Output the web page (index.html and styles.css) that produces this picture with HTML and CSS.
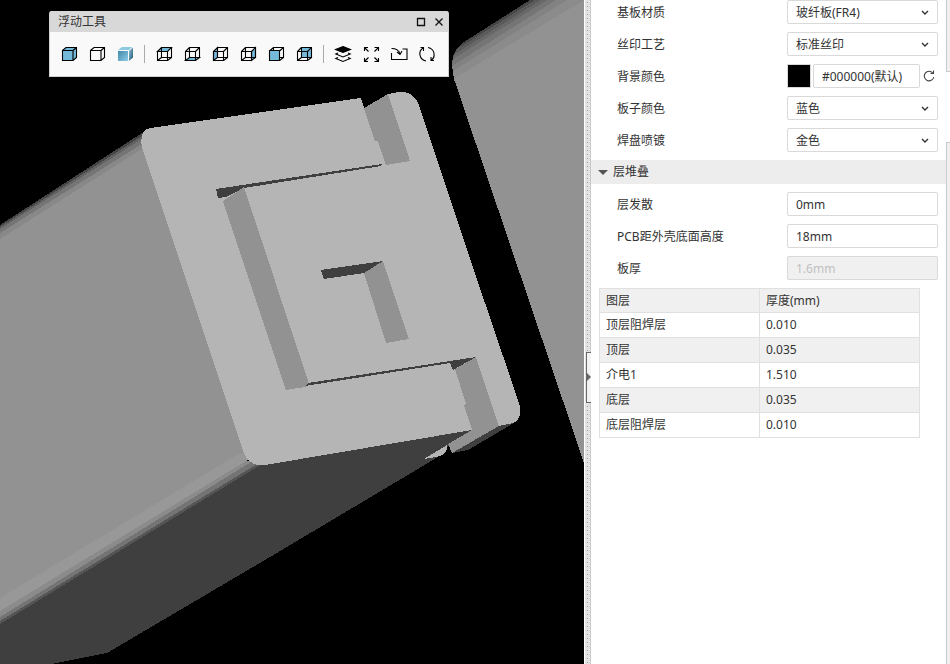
FILE: index.html
```html
<!DOCTYPE html>
<html lang="zh-CN">
<head>
<meta charset="utf-8">
<title>3D 预览</title>
<link rel="stylesheet" href="styles.css">
</head>
<body>
<div class="app">
  <main class="stage">
    <svg class="scene" viewBox="0 0 584 664" preserveAspectRatio="xMinYMin slice" shape-rendering="crispEdges" aria-hidden="true">
      <!-- right body -->
      <path fill="#464646" d="M530 0L464 42Q455 48 453 57L452 63L454 79L468 120L584 463V0Z"/>
      <path fill="#5a5a5a" d="M535 0L457 49L453 57L454 79L584 463V0Z"/>
      <path fill="#686868" d="M541 0L455 54L452 61L454 79L584 463V0Z"/>
      <path fill="#757575" d="M547 0L453 59L452 65L454 79L584 463V0Z"/>
      <path fill="#828282" d="M556 0L452 66L454 79L584 463V0Z"/>
      <path fill="#8b8b8b" d="M567 0L453 71L454 79L584 463V0Z"/>
      <path fill="#929292" d="M584 0L455 78L468 120L584 463Z"/>
      <!-- left body with its rounded edges -->
      <path fill="#444" d="M0 225L145 131L200 150V300L0 300Z"/>
      <path fill="#626262" d="M0 227L145 134V300H0Z"/>
      <path fill="#757575" d="M0 229L145 137V300H0Z"/>
      <path fill="#888" d="M0 233L145 142V300H0Z"/>
      <path fill="#929292" d="M0 239L145 147L262 445L0 599Z"/>
      <path fill="#989898" d="M0 598L240 453L262 450L246 461L0 611Z"/>
      <path fill="#8b8b8b" d="M0 611L246 461L262 460L0 617Z"/>
      <path fill="#747474" d="M0 617L251 462L262 462L0 621Z"/>
      <path fill="#555" d="M0 621L257 464L266 464L0 624Z"/>
      <path fill="#3f3f3f" d="M0 624L262 464L472 430L448 446L438 457L270 557L107 653L51 664H0Z"/>
      <path fill="#b5b5b5" d="M424 459L447 445V449Q444 456 436 457Z"/>
      <!-- front face -->
      <path fill="#b5b5b5" d="M150 128L361 98L364 108L388 94L398 92H404Q414 93 419 105L484 300L520 406Q522 421 511 424L499 426L472 430L265 465Q250 467 244 453L142 147Q139 130 150 128Z"/>
      <path fill="#929292" d="M364 108L388 94L410 161L386 165L378 141H375Z"/>
      <path fill="#3f3f3f" d="M216 189L382 164L381 166L244 188L226 197L218 198Z"/>
      <path fill="#929292" d="M223 201L244 187L309 384L305 387L286 390Z"/>
      <path fill="#3f3f3f" d="M321 270L383 261L364 273L324 279Z"/>
      <path fill="#929292" d="M364 273L383 261L409 339L386 343Z"/>
      <path fill="#3f3f3f" d="M308 383L476 357L453 370L450 363L305 386Z"/>
      <path fill="#929292" d="M476 357L499 426L452 453L448 444L472 430L464 405L466 404L455 369Z"/>
      <path fill="#3f3f3f" d="M499 426L514 423L468 450L452 453Z"/>
    </svg>

    <section class="toolbox" aria-label="浮动工具">
      <header class="toolbox-title">
        <span class="toolbox-name">浮动工具</span>
        <button class="win-btn" aria-label="最大化"><svg viewBox="0 0 10 10" width="10" height="10"><path d="M1.5 1.5h7v7h-7z"/></svg></button>
        <button class="win-btn" aria-label="关闭"><svg viewBox="0 0 10 10" width="10" height="10"><path d="M1.5 1.5l7 7M8.5 1.5l-7 7"/></svg></button>
      </header>
      <div class="toolbox-body">
        <button class="tool" aria-label="实体"><svg viewBox="0 0 16 16"><path class="face" d="M1.5 4.5L5 1.5H15.5V11.5L12 14.5H1.500Z"/><path d="M1.5 4.5H12V14.5M12 4.5L15.5 1.5"/></svg></button>
        <button class="tool" aria-label="轮廓"><svg viewBox="0 0 16 16"><path d="M1.5 4.5L5 1.5H15.5V11.5L12 14.5H1.5ZM1.5 4.5H12V14.5M12 4.5L15.5 1.5"/></svg></button>
        <button class="tool" aria-label="着色"><svg viewBox="0 0 16 16">
          <defs>
            <linearGradient id="front" x1="0" y1="0" x2="1" y2="1"><stop offset="0" stop-color="#3f87a8"/><stop offset="1" stop-color="#8fcde8"/></linearGradient>
            <linearGradient id="side" x1="0" y1="0" x2="1" y2="1"><stop offset="0" stop-color="#8fc9e2"/><stop offset="1" stop-color="#1f4f68"/></linearGradient>
          </defs>
          <path class="plain" fill="url(#front)" d="M1 5H11V15H1Z"/><path class="plain" fill="#8cc8e0" d="M1 4L5 1H15L12 4Z"/><path class="plain" fill="url(#side)" d="M12 5L16 1.5V11.5L12 15Z"/></svg></button>
        <span class="divider"></span>
        <button class="tool" aria-label="顶视图"><svg viewBox="0 0 16 16"><path class="face" d="M1.5 5.5L5.5 1.5H15.5L11.5 5.5Z"/><path d="M1.5 5.5H11.5V14.5H1.5ZM5.5 1.5H15.5V11.5H5.5ZM1.5 14.5L5.5 11.5M11.5 14.5L15.5 11.5"/></svg></button>
        <button class="tool" aria-label="底视图"><svg viewBox="0 0 16 16"><path class="face" d="M1.5 14.5L5.5 11.5H15.5L11.5 14.5Z"/><path d="M1.5 5.5H11.5V14.5H1.5ZM5.5 1.5H15.5V11.5H5.5ZM1.5 5.5L5.5 1.5M11.5 5.5L15.5 1.5"/></svg></button>
        <button class="tool" aria-label="左视图"><svg viewBox="0 0 16 16"><path class="face" d="M1.5 5.5L5.5 1.5V11.5L1.5 14.5Z"/><path d="M1.5 5.5H11.5V14.5H1.5ZM5.5 1.5H15.5V11.5H5.5ZM11.5 5.5L15.5 1.5M11.5 14.5L15.5 11.5"/></svg></button>
        <button class="tool" aria-label="右视图"><svg viewBox="0 0 16 16"><path class="face" d="M11.5 5.5L15.5 1.5V11.5L11.5 14.5Z"/><path d="M1.5 5.5H11.5V14.5H1.5ZM5.5 1.5H15.5V11.5H5.5ZM1.5 5.5L5.5 1.5M1.5 14.5L5.5 11.5"/></svg></button>
        <button class="tool" aria-label="前视图"><svg viewBox="0 0 16 16"><path d="M5.5 5V1.5H15.5V11.5H11.5M1.5 5L5.5 1.5M11.5 5L15.5 1.5M11.5 14.5L15.5 11.5"/><path class="face" d="M1.5 4.5H11.5V14.5H1.5Z"/></svg></button>
        <button class="tool" aria-label="后视图"><svg viewBox="0 0 16 16"><path class="face" d="M5.5 1.5H15.5V11.5H5.5Z"/><path d="M1.5 5.5H11.5V14.5H1.5ZM1.5 5.5L5.5 1.5M11.5 5.5L15.5 1.5M1.5 14.5L5.5 11.5M11.5 14.5L15.5 11.5"/></svg></button>
        <span class="divider"></span>
        <button class="tool" aria-label="图层"><svg viewBox="0 0 16 16"><path class="solid" d="M8 .5L15.5 3.5L8 6.5L.5 3.5Z"/><path d="M3 7L.8 8L8 11L15.2 8L13 7M3 11.5L.8 12.5L8 15.5L15.2 12.5L13 11.5"/></svg></button>
        <button class="tool" aria-label="适应窗口"><svg viewBox="0 0 16 16"><path d="M1.500 5V1.500H5M1.500 1.500L5.500 5.500M11.500 1.500H15.500V5M15.500 1.500L11.500 5.500M1.500 12V15.500H5M1.500 15.500L5.500 11.500M11.500 15.500H15.500V12M15.500 15.500L11.500 11.500"/></svg></button>
        <button class="tool" aria-label="导入"><svg viewBox="0 0 16 16"><path d="M.5 7V13.500H16V3H11.500M.5 2.500C5 2.500 8 4 9 8M6 6L9 8.500L11 5"/></svg></button>
        <button class="tool" aria-label="重置"><svg viewBox="0 0 16 16"><path d="M7 15C0 13.500 -1 5 4 2M1.500 1.500H4.500V5M9 1.500C16 3 17 11 12 14.500M15 14.500H12V11"/></svg></button>
      </div>
    </section>
  </main>

  <div class="splitter"><button class="collapse" aria-label="收起面板"></button></div>

  <aside class="panel">
    <div class="fields">
      <label for="base">基板材质</label>
      <div class="pick"><select id="base"><option>玻纤板(FR4)</option></select><svg viewBox="0 0 8 6"><path d="M1 1l3 3 3-3"/></svg></div>
      <label for="silk">丝印工艺</label>
      <div class="pick"><select id="silk"><option>标准丝印</option></select><svg viewBox="0 0 8 6"><path d="M1 1l3 3 3-3"/></svg></div>
      <label for="bg">背景颜色</label>
      <div class="color-row">
        <button class="swatch" aria-label="选择颜色"></button>
        <input id="bg" type="text" value="#000000(默认)">
        <button class="reset" aria-label="恢复默认"><svg viewBox="0 0 12 12"><path d="M9.800 3A4.800 4.800 0 1 0 10.800 7M10.500 .5V3.500H7.500"/></svg></button>
      </div>
      <label for="board">板子颜色</label>
      <div class="pick"><select id="board"><option>蓝色</option></select><svg viewBox="0 0 8 6"><path d="M1 1l3 3 3-3"/></svg></div>
      <label for="pad">焊盘喷镀</label>
      <div class="pick"><select id="pad"><option>金色</option></select><svg viewBox="0 0 8 6"><path d="M1 1l3 3 3-3"/></svg></div>
    </div>
    <h2 class="section"><button class="section-toggle">层堆叠</button></h2>
    <div class="fields">
      <label for="spread">层发散</label>
      <input id="spread" type="text" value="0mm">
      <label for="height">PCB距外壳底面高度</label>
      <input id="height" type="text" value="18mm">
      <label for="thick">板厚</label>
      <input id="thick" type="text" value="1.6mm" disabled>
    </div>
    <table class="stack">
      <thead><tr><th>图层</th><th>厚度(mm)</th></tr></thead>
      <tbody>
        <tr><td>顶层阻焊层</td><td>0.010</td></tr>
        <tr><td>顶层</td><td>0.035</td></tr>
        <tr><td>介电1</td><td>1.510</td></tr>
        <tr><td>底层</td><td>0.035</td></tr>
        <tr><td>底层阻焊层</td><td>0.010</td></tr>
      </tbody>
    </table>
  </aside>

  <div class="side-tabs"><span class="tab"></span><span class="tab active"></span><span class="tab rest"></span></div>
</div>
</body>
</html>
```
FILE: styles.css
```css
* { box-sizing: border-box; }

body {
  margin: 0;
  font: 12px/18px "Noto Sans", "Noto Sans CJK SC", sans-serif;
  color: #333;
}

button, input, select { font: inherit; color: inherit; }
button { padding: 0; border: 0; background: none; }
h2 { margin: 0; font: inherit; }

.app {
  display: grid;
  grid-template-columns: minmax(0, 1fr) 7px 355px 4px;
  min-height: 100vh;
  background: #fff;
}

/* 3D stage */
.stage { position: relative; overflow: hidden; background: #000; }
.scene { position: absolute; inset: 0; width: 100%; height: 100%; }

.toolbox {
  position: absolute;
  top: 11px;
  left: 49px;
  border: 1px solid #d0d0d0;
  border-top: 0;
  border-radius: 3px 3px 0 0;
  background: #f9f9f9;
}
.toolbox-title {
  display: flex;
  align-items: center;
  height: 21px;
  padding: 0 4px 0 8px;
  border-radius: 3px 3px 0 0;
  background: #d8d8d8;
}
.toolbox-name { flex: 1; }
.win-btn { display: flex; margin-left: 8px; }
.win-btn svg { fill: none; stroke: #111; stroke-width: 1.3; }
.toolbox-body {
  display: flex;
  align-items: center;
  height: 44px;
  padding: 0 7px 0 5px;
}
.tool { display: flex; justify-content: center; width: 28px; }
.tool svg { width: 16px; height: 16px; overflow: visible; fill: none; stroke: #000; stroke-width: 1.1; }
.tool .face { fill: #74b9da; }
.tool .plain { stroke: none; }
.tool .solid { fill: #000; }
.divider { width: 1px; height: 18px; margin: 0 5px; background: #aaa; }

/* splitter */
.splitter {
  display: flex;
  align-items: center;
  border-left: 1px solid #fff;
  border-right: 1px solid #c8c8c8;
  background: conic-gradient(#a8a8a8 25%, transparent 0) -2px 1px / 5px 4px #e6e6e6;
  background: linear-gradient(#aaa, #aaa) 2px 0 / 1px 100% no-repeat #e3e3e3;
  background: repeating-linear-gradient(#e3e3e3 0 2px, #999 2px 3px, #e3e3e3 3px 4px) 2px 0 / 1px 100% no-repeat #e3e3e3;
}
.collapse {
  display: flex;
  align-items: center;
  width: 5px;
  height: 51px;
  margin: 90px 0 0 1px;
  border: 1px solid #666;
  border-right: 0;
  background: #f2f2f2;
}
.collapse::before {
  content: "";
  border: 4px solid transparent;
  border-left-color: #666;
  border-right: 0;
}

/* property panel */
.panel { min-width: 0; }
.fields {
  display: grid;
  grid-template-columns: 170px minmax(0, 1fr);
  grid-auto-rows: 24px;
  gap: 8px 0;
  align-items: center;
  padding: 0 8px 8px 26px;
}
.fields label { padding-top: 2px; }
.section + .fields { padding-top: 8px; }

.fields input, .fields select {
  width: 100%;
  height: 24px;
  padding: 0 8px;
  border: 1px solid #d9d9d9;
  border-radius: 2px;
  background: #fff;
  appearance: none;
}
.fields select { padding-top: 1px; }
.fields input:disabled { background: #f0f0f0; color: #c0c0c0; }

.pick { position: relative; }
.pick select { display: block; }
.pick svg {
  position: absolute;
  right: 9px;
  top: 10px;
  width: 8px;
  height: 6px;
  fill: none;
  stroke: #333;
  stroke-width: 1.4;
  pointer-events: none;
}

.color-row { display: flex; align-items: center; }
.swatch { flex: none; width: 24px; height: 24px; margin-right: 2px; border: 1px solid #d9d9d9; background: #000; }
.color-row input { flex: 1; min-width: 0; }
.reset { flex: none; display: flex; width: 18px; justify-content: center; }
.reset svg { width: 12px; height: 12px; fill: none; stroke: #444; stroke-width: 1.1; }

.section { background: #ededed; }
.section-toggle {
  display: flex;
  align-items: center;
  gap: 5px;
  width: 100%;
  height: 24px;
  padding-left: 7px;
}
.section-toggle::before {
  content: "";
  border: 5px solid transparent;
  border-top-color: #555;
  border-bottom: 0;
}

.stack {
  width: calc(100% - 34px);
  margin-left: 8px;
  border-collapse: collapse;
  table-layout: fixed;
}
.stack th, .stack td {
  height: 25px;
  padding: 0 6px;
  border: 1px solid #e0e0e0;
  text-align: left;
  font-weight: 400;
}
.stack th { height: 24px; }
.stack th, .stack tbody tr:nth-child(even) { background: #f0f0f0; }

/* vertical tab strip at the window edge */
.side-tabs { display: flex; flex-direction: column; }
.tab { height: 72px; border: 1px solid #ccc; border-width: 0 0 1px 1px; background: #f0f0f0; }
.tab.active { height: 70px; border: 0; background: #fff; }
.tab.rest { flex: 1; border-width: 1px 0 0 1px; }
```
